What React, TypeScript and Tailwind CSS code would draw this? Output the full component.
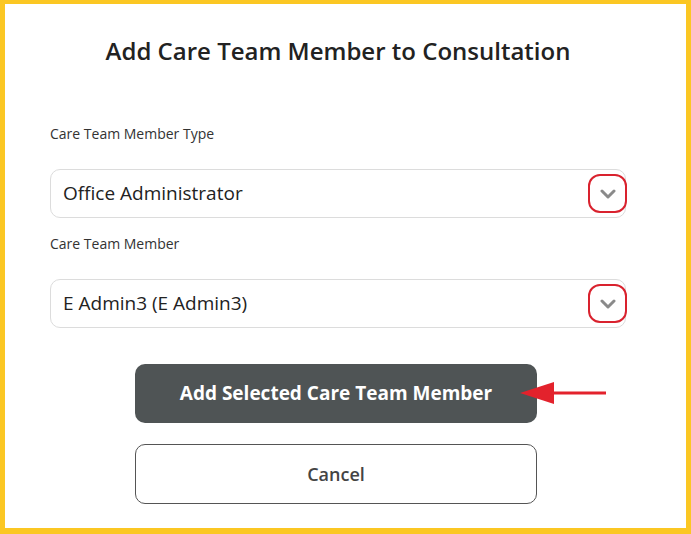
import React from 'react';

const font = { fontFamily: '"Open Sans", Lato, sans-serif' };

function Chevron() {
  return (
    <div className="flex h-[39px] w-[39px] items-center justify-center rounded-[12px] border-2 border-[#d9222e]">
      <svg width="16" height="10" viewBox="0 0 16 10" fill="none">
        <path d="M2 2l6 6 6-6" stroke="#8a8a8a" strokeWidth="3" strokeLinecap="round" strokeLinejoin="round" />
      </svg>
    </div>
  );
}

function SelectField({ label, value }: { label: string; value: string }) {
  return (
    <div className="flex flex-col">
      <div className="h-5 text-[14px] leading-5 text-[#333]">{label}</div>
      <div className="mt-[25px] flex h-[49px] items-center justify-between rounded-[10px] border border-[#dcdcdc] pl-[12px]">
        <span className="text-[19px] text-[#222]">{value}</span>
        <div className="-mr-[2px]">
          <Chevron />
        </div>
      </div>
    </div>
  );
}

export default function App() {
  return (
    <div className="h-[534px] w-[691px] bg-[#fbc723] pb-[6px] pl-[5px] pr-[5px] pt-[4px]" style={font}>
      <div className="flex h-full flex-col bg-white pl-[45px] pr-[60px] pt-[32px]">
        <h1 className="text-center text-[24px] font-semibold leading-[30px] text-[#222]">
          Add Care Team Member to Consultation
        </h1>

        <div className="mt-[58px]">
          <SelectField label="Care Team Member Type" value="Office Administrator" />
        </div>
        <div className="mt-[16px]">
          <SelectField label="Care Team Member" value="E Admin3 (E Admin3)" />
        </div>

        <div className="relative ml-[85px] mt-[36px] w-[402px]">
          <button className="flex h-[59px] w-full items-center justify-center rounded-[10px] bg-[#4f5455] text-[19px] font-bold text-white">
            Add Selected Care Team Member
          </button>
          <svg className="absolute left-[383px] top-[17px]" width="90" height="26" viewBox="0 0 90 26">
            <polygon points="2,12 36,1 36,23" fill="#e3222c" />
            <rect x="34" y="10.5" width="54" height="3" fill="#e3222c" />
          </svg>
        </div>

        <button className="ml-[85px] mt-[21px] flex h-[60px] w-[402px] items-center justify-center rounded-[10px] border border-[#555] bg-white text-[18px] font-semibold text-[#444]">
          Cancel
        </button>
      </div>
    </div>
  );
}
